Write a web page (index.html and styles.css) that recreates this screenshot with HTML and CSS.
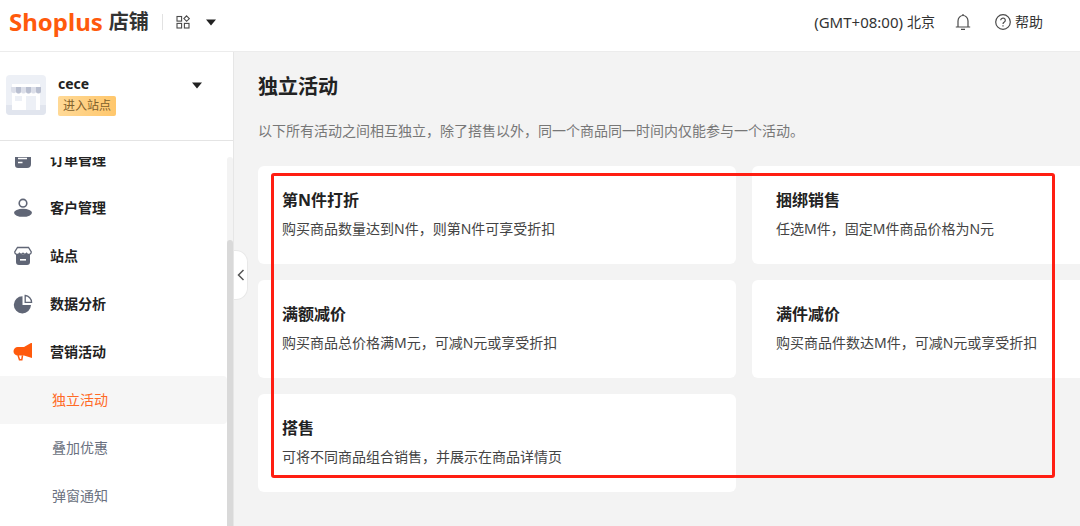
FILE: index.html
```html
<!DOCTYPE html>
<html lang="zh-CN">
<head>
<meta charset="utf-8">
<meta name="viewport" content="width=device-width, initial-scale=1">
<title>Shoplus 店铺 - 独立活动</title>
<link rel="stylesheet" href="styles.css">
</head>
<body>
<div class="app">
  <header class="topbar">
    <a class="brand" href="#"><span class="brand-name">Shoplus</span><span class="brand-suffix">店铺</span></a>
    <span class="topbar-divider"></span>
    <button class="apps-button" type="button" aria-label="切换应用">
      <svg width="14" height="14" viewBox="0 0 14 14" fill="none" stroke="#4a4a4a" stroke-width="1.1">
        <rect x="1" y="1.500" width="4.600" height="4.600"/><path d="M10.600.9l2.700 2.700-2.700 2.700-2.700-2.700z"/>
        <rect x="1" y="8.400" width="4.600" height="4.600"/><rect x="8.400" y="8.400" width="4.600" height="4.600"/>
      </svg>
      <svg width="10" height="7" viewBox="0 0 10 7" fill="#222"><path d="M0 .5h10L5 6.5z"/></svg>
    </button>
    <div class="topbar-tools">
      <button class="tool" type="button"><span class="tool-offset">(GMT+08:00)</span><span>北京</span></button>
      <button class="tool" type="button" aria-label="通知">
        <svg width="16" height="18" viewBox="0 0 16 18" fill="none" stroke="#4a4a4a" stroke-width="1.2">
          <path d="M8 1v1.5M3 14V8a5 5.500 0 0 1 10 0v6M.8 14h14.400M6 16.400h4"/>
        </svg>
      </button>
      <button class="tool" type="button">
        <svg width="16" height="16" viewBox="0 0 16 16" fill="none" stroke="#4a4a4a" stroke-width="1.2">
          <circle cx="8" cy="8" r="7.300"/><path d="M5.700 6.300a2.300 2.200 0 1 1 3.600 1.800C8.300 8.700 8 9 8 10M8 11.200v1.300"/>
        </svg>
        <span>帮助</span>
      </button>
    </div>
  </header>

  <div class="body">
    <aside class="sidebar">
      <div class="store">
        <svg class="store-logo" width="40" height="40" viewBox="0 0 40 40">
          <rect width="40" height="40" rx="4" fill="#edf0f6"/>
          <path d="M0 30h40v6a4 4 0 0 1-4 4H4a4 4 0 0 1-4-4z" fill="#e1e5ee"/>
          <path d="M6 9h28v26H6z" fill="#fff"/>
          <path d="M5 12h30v4a2.800 2.800 0 0 1-5 1 2.800 2.800 0 0 1-5 0 2.800 2.800 0 0 1-5 0 2.800 2.800 0 0 1-5 0 2.800 2.800 0 0 1-5 0 2.800 2.800 0 0 1-5-1z" fill="#dcdfe9"/>
          <path d="M10 12h5v4a2.500 2.500 0 0 1-5 0zM20 12h5v4a2.500 2.500 0 0 1-5 0zM30 12h5v4a2.500 2.500 0 0 1-5 0z" fill="#b9bfd0"/>
          <path d="M9 21h7v5H9zM20 21h10v14H20z" fill="#edf0f6"/>
        </svg>
        <div class="store-info">
          <strong class="store-name">cece</strong>
          <a class="store-link" href="#">进入站点</a>
        </div>
        <button class="store-switch" type="button" aria-label="切换店铺">
          <svg width="10" height="7" viewBox="0 0 10 7" fill="#222"><path d="M0 .5h10L5 6.5z"/></svg>
        </button>
      </div>

      <div class="nav-scroll">
        <nav class="nav">
          <a class="nav-item" href="#">
            <svg width="20" height="20" viewBox="0 0 20 20"><path d="M2 3h16v11a4 4 0 0 1-4 4H5a3 3 0 0 1-3-3z" fill="#606676"/><path d="M5 8.500h9M5 12.500h4.500" stroke="#fff" stroke-width="1.6"/></svg>
            订单管理
          </a>
          <a class="nav-item" href="#">
            <svg width="20" height="20" viewBox="0 0 20 20"><circle cx="10" cy="5.200" r="3.800" fill="none" stroke="#606676" stroke-width="1.6"/><ellipse cx="10" cy="14.800" rx="9" ry="4" fill="#606676"/></svg>
            客户管理
          </a>
          <a class="nav-item" href="#">
            <svg width="20" height="20" viewBox="0 0 20 20"><path d="M4.500 1.500h11L18.300 6a2.500 2.500 0 0 1-4.600 1.300 2.500 2.500 0 0 1-3.700 0 2.500 2.500 0 0 1-3.700 0A2.500 2.500 0 0 1 1.700 6z" fill="#fff" stroke="#606676" stroke-width="1.3"/><path d="M3 9l3.300-1.200 3.700.8 3.700-.8L17 9v7a3 3 0 0 1-3 3H6a3 3 0 0 1-3-3z" fill="#606676"/><path d="M7 13.800h6" stroke="#fff" stroke-width="1.6"/></svg>
            站点
          </a>
          <a class="nav-item" href="#">
            <svg width="20" height="20" viewBox="0 0 20 20"><path d="M9.500 2.200V11H18a8.600 8.600 0 1 1-8.500-8.800z" fill="#606676"/><path d="M12.200 1.500a7 7 0 0 1 6.400 6.900h-6.400z" fill="none" stroke="#606676" stroke-width="1.3"/></svg>
            数据分析
          </a>
          <a class="nav-item" href="#">
            <svg width="20" height="20" viewBox="0 0 20 20"><path d="M19 1.500v14.500L11 13.500H4.800A4.300 4.300 0 0 1 4.800 4.900H11l6.500-3.600C18.200.9 19 .9 19 1.500z" fill="#ff5a0c"/><path d="M5 13l1.500 4.800h2.300l.7-4.500" fill="none" stroke="#ff5a0c" stroke-width="1.5"/></svg>
            营销活动
          </a>
          <a class="nav-sub nav-sub-active" href="#" aria-current="page">独立活动</a>
          <a class="nav-sub" href="#">叠加优惠</a>
          <a class="nav-sub" href="#">弹窗通知</a>
        </nav>
        <div class="scroll-track"><div class="scroll-thumb"></div></div>
      </div>
    </aside>

    <main class="content">
      <button class="collapse" type="button" aria-label="收起菜单">
        <svg width="8" height="12" viewBox="0 0 8 12" fill="none" stroke="#555" stroke-width="1.5"><path d="M6.500 1L1.500 6l5 5"/></svg>
      </button>
      <h1 class="page-title">独立活动</h1>
      <p class="page-intro">以下所有活动之间相互独立，除了搭售以外，同一个商品同一时间内仅能参与一个活动。</p>
      <div class="cards">
        <section class="card"><h2 class="card-title">第N件打折</h2><p class="card-text">购买商品数量达到N件，则第N件可享受折扣</p></section>
        <section class="card"><h2 class="card-title">捆绑销售</h2><p class="card-text">任选M件，固定M件商品价格为N元</p></section>
        <section class="card"><h2 class="card-title">满额减价</h2><p class="card-text">购买商品总价格满M元，可减N元或享受折扣</p></section>
        <section class="card"><h2 class="card-title">满件减价</h2><p class="card-text">购买商品件数达M件，可减N元或享受折扣</p></section>
        <section class="card"><h2 class="card-title">搭售</h2><p class="card-text">可将不同商品组合销售，并展示在商品详情页</p></section>
        <div class="highlight"></div>
      </div>
    </main>
  </div>
</div>
</body>
</html>
```
FILE: styles.css
```css
* {
  box-sizing: border-box;
}

body {
  margin: 0;
  color: #222;
  background: #f3f3f3;
  font-family: "Noto Sans", "Noto Sans CJK SC", sans-serif;
  font-size: 14px;
  line-height: 20px;
}

h1, h2, p {
  margin: 0;
}

a {
  color: inherit;
  text-decoration: none;
}

button {
  padding: 0;
  border: 0;
  background: none;
  color: inherit;
  font: inherit;
  cursor: pointer;
}

svg {
  display: block;
  flex: none;
}

.app {
  display: flex;
  flex-direction: column;
  height: 100vh;
  overflow: hidden;
}

/* Top bar */
.topbar {
  display: flex;
  align-items: center;
  flex: none;
  padding: 0 37px 7px 9px;
  height: 52px;
  background: #fff;
  border-bottom: 1px solid #ececec;
}

.brand {
  display: flex;
  align-items: center;
  gap: 6px;
}

.brand-name {
  color: #ff5a0c;
  font-size: 24px;
  font-weight: 700;
}

.brand-suffix {
  color: #333;
  font-size: 20px;
  font-weight: 700;
}

.topbar-divider {
  width: 1px;
  height: 16px;
  margin: 0 13px;
  background: #e2e2e2;
}

.apps-button {
  display: flex;
  align-items: center;
  gap: 16px;
}

.topbar-tools {
  display: flex;
  align-items: center;
  gap: 24px;
  margin-left: auto;
}

.topbar-tools .tool:first-child {
  margin-right: -4px;
}

.tool {
  display: flex;
  align-items: center;
  gap: 4px;
  color: #333;
}

.tool-offset {
  font-size: 15px;
}

/* Sidebar */
.body {
  display: flex;
  flex: 1;
  min-height: 0;
}

.sidebar {
  display: flex;
  flex-direction: column;
  flex: none;
  width: 234px;
  background: #fff;
  border-right: 1px solid #e6e6e6;
}

.store {
  display: flex;
  align-items: center;
  gap: 12px;
  padding: 22px 31px 24px 6px;
  border-bottom: 1px solid #e4e4e4;
}

.store-info {
  display: flex;
  flex-direction: column;
  align-items: flex-start;
  gap: 2px;
}

.store-link {
  padding: 0 5px;
  border-radius: 2px;
  background: linear-gradient(90deg, #ffd996, #ffc76c);
  color: #80602c;
  font-size: 12px;
}

.store-switch {
  margin-bottom: 20px;
  margin-left: auto;
}

.nav-scroll {
  display: flex;
  flex: 1;
  min-height: 0;
  margin-top: 16px;
  overflow: hidden;
}

/* The list is scrolled part of the way through its first row */
.nav {
  flex: 1;
  margin-top: -21px;
}

.nav-item,
.nav-sub {
  display: flex;
  align-items: center;
  height: 48px;
}

.nav-item {
  gap: 17px;
  padding-left: 13px;
  font-weight: 700;
}

.nav-sub {
  padding-left: 52px;
  border-radius: 0 4px 4px 0;
  color: #6b7180;
}

.nav-sub-active {
  background: #f6f6f6;
  color: #ff6a26;
}

.scroll-track {
  width: 6px;
  padding-top: 83px;
  border-radius: 3px 3px 0 0;
  background: #f3f3f3;
}

.scroll-thumb {
  height: 100%;
  border-radius: 3px 3px 0 0;
  background: #d9d9d9;
}

/* Content */
.content {
  position: relative;
  flex: 1;
  min-width: 0;
  padding: 20px 24px;
  overflow: hidden;
}

.collapse {
  position: absolute;
  top: 198px;
  left: 0;
  display: flex;
  align-items: center;
  justify-content: center;
  width: 14px;
  height: 50px;
  border: 1px solid #e8e8e8;
  border-left: 0;
  border-radius: 0 12px 12px 0;
  background: #fff;
}

.page-title {
  font-size: 20px;
  line-height: 30px;
}

.page-intro {
  margin-top: 18px;
  color: #777;
  line-height: 22px;
}

.cards {
  position: relative;
  display: grid;
  grid-template-columns: 1fr 1fr;
  gap: 16px;
  min-width: 972px;
  margin-top: 24px;
}

.card {
  padding: 23px 24px 25px;
  border-radius: 6px;
  background: #fff;
}

.card-title {
  font-size: 16px;
  line-height: 22px;
}

.card-text {
  margin-top: 8px;
  color: #444;
}

.highlight {
  position: absolute;
  inset: 7px 175px 14px 13px;
  border: 3px solid #ff1e12;
  border-radius: 3px;
  pointer-events: none;
}
```
